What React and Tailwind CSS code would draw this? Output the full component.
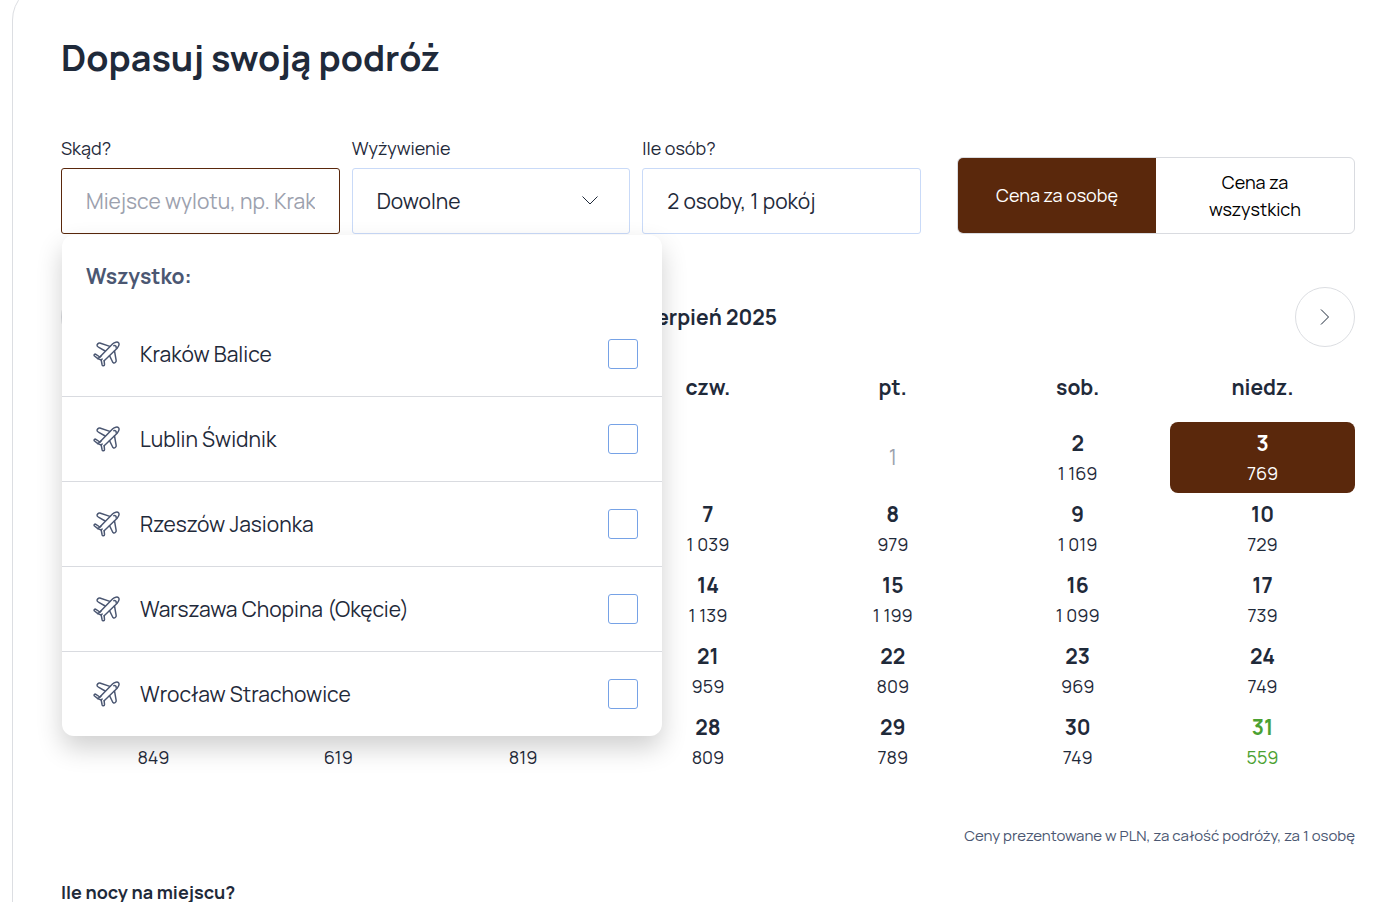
import { useState } from 'react'

const AIRPORTS = [
  { id: 'krk', name: 'Kraków Balice' },
  { id: 'luz', name: 'Lublin Świdnik' },
  { id: 'rze', name: 'Rzeszów Jasionka' },
  { id: 'waw', name: 'Warszawa Chopina (Okęcie)' },
  { id: 'wro', name: 'Wrocław Strachowice' },
]

const WEEKDAYS = ['pon.', 'wt.', 'śr.', 'czw.', 'pt.', 'sob.', 'niedz.']

const WEEKS = [
  [null, null, null, null, { day: 1, past: true }, { day: 2, price: '1 169' }, { day: 3, price: '769' }],
  [{ day: 4 }, { day: 5 }, { day: 6 }, { day: 7, price: '1 039' }, { day: 8, price: '979' }, { day: 9, price: '1 019' }, { day: 10, price: '729' }],
  [{ day: 11 }, { day: 12 }, { day: 13 }, { day: 14, price: '1 139' }, { day: 15, price: '1 199' }, { day: 16, price: '1 099' }, { day: 17, price: '739' }],
  [{ day: 18 }, { day: 19 }, { day: 20 }, { day: 21, price: '959' }, { day: 22, price: '809' }, { day: 23, price: '969' }, { day: 24, price: '749' }],
  [{ day: 25, price: '849' }, { day: 26, price: '619' }, { day: 27, price: '819' }, { day: 28, price: '809' }, { day: 29, price: '789' }, { day: 30, price: '749' }, { day: 31, price: '559', best: true }],
]

function PlaneIcon() {
  return (
    <svg viewBox="0 0 80 78" className="w-[27px] h-[26px] shrink-0" fill="none" stroke="#4b5772" strokeWidth="4.4" strokeLinecap="round" strokeLinejoin="round" aria-hidden="true">
      <path d="M20 48 58 9C64 3 73 2 76 5C79 9 77 16 72 22L33 59" />
      <path d="M50 16 20 6C16 5 10 11 12 15C13 17 15 18 17 19L36 30" />
      <path d="M64 30 69 58C70 63 64 68 60 65C58 64 58 62 57 60L49 44" />
      <path d="M20 48 8 40C5 38 1 42 4 45L14 53L24 57L27 72C28 76 34 75 34 71L33 59" />
      <path d="M14 53 24 45M24 57 27 54" />
      <path d="M62 14C67 13 70 16 69 21" />
    </svg>
  )
}

function Chevron({ className, points }) {
  return (
    <svg viewBox="0 0 16 16" className={className} fill="none" stroke="#1f2a3a" strokeWidth="1" aria-hidden="true">
      <polyline points={points} />
    </svg>
  )
}

function AirportList({ selected, onToggle }) {
  return (
    <div className="absolute left-px top-full z-20 mt-px w-[600px] overflow-hidden rounded-xl bg-white shadow-[0_12px_26px_rgba(0,0,0,0.19)]">
      <div className="px-6 pt-[26px] pb-[21px] text-[21px] leading-[30px] font-bold text-[#4b5772]">Wszystko:</div>
      <ul>
        {AIRPORTS.map((airport) => (
          <li key={airport.id} className="border-b border-[#d9dbe0] last:border-b-0">
            <label htmlFor={airport.id} className="flex h-[84px] cursor-pointer items-center pr-6 pl-[31px]">
              <PlaneIcon />
              <span className="ml-5 flex-1 text-[21px] leading-[30px]">{airport.name}</span>
              <input
                id={airport.id}
                type="checkbox"
                checked={selected.includes(airport.id)}
                onChange={() => onToggle(airport.id)}
                className="size-[30px] appearance-none rounded-[3px] border border-[#76a2e6] bg-white checked:bg-[#5a280c]"
              />
            </label>
          </li>
        ))}
      </ul>
    </div>
  )
}

function DayCell({ item, active, onSelect }) {
  if (!item) return <td />
  if (item.past) return <td className="p-0 text-center text-[21px] text-[#9ca1ae]">{item.day}</td>

  const color = active ? 'bg-[#5a280c] text-white' : item.best ? 'text-[#4ba132]' : ''
  return (
    <td className="p-0">
      <button type="button" onClick={() => onSelect(item.day)} className={`flex h-[71px] w-full flex-col items-center justify-center rounded-lg ${color}`}>
        <span className="text-[21px] leading-[30px] font-bold">{item.day}</span>
        <span className="text-[18px] leading-[30px]">{item.price}</span>
      </button>
    </td>
  )
}

export default function App() {
  const [selected, setSelected] = useState([])
  const [day, setDay] = useState(3)
  const [perPerson, setPerPerson] = useState(true)

  const toggleAirport = (id) => {
    setSelected(selected.includes(id) ? selected.filter((s) => s !== id) : [...selected, id])
  }

  const field = 'h-[66px] w-full rounded-[3px] border bg-white px-6 text-[21px] outline-none'

  return (
    <div className="h-screen overflow-hidden bg-white font-['Manrope','Inter',sans-serif] text-[#1f2a3a]">
      <main className="-mt-4 -mr-1 ml-3 rounded-l-[36px] border border-[#dcdee2] px-12 pt-[49px] pb-12">
        <h1 className="text-[36px] leading-[48px] font-bold">Dopasuj swoją podróż</h1>

        <div className="mt-[53px] flex items-end gap-9">
          <div className="grid flex-1 grid-cols-3 gap-3">
            <div className="relative">
              <label htmlFor="from" className="block pb-1.5 text-[18px] leading-[27px]">Skąd?</label>
              <input id="from" type="text" placeholder="Miejsce wylotu, np. Kraków" className={`${field} border-[#5a280c] placeholder:text-[#9ca1ae]`} />
              <AirportList selected={selected} onToggle={toggleAirport} />
            </div>
            <div>
              <label htmlFor="board" className="block pb-1.5 text-[18px] leading-[27px]">Wyżywienie</label>
              <div className="relative">
                <select id="board" className={`${field} appearance-none border-[#c9daf8] leading-[30px]`}>
                  <option>Dowolne</option>
                </select>
                <Chevron className="pointer-events-none absolute top-6 right-8 size-4" points="0.5,4.5 8,12 15.5,4.5" />
              </div>
            </div>
            <div>
              <label htmlFor="people" className="block pb-1.5 text-[18px] leading-[27px]">Ile osób?</label>
              <input id="people" type="text" readOnly value="2 osoby, 1 pokój" className={`${field} border-[#c9daf8]`} />
            </div>
          </div>

          <div className="flex h-[77px] w-[398px] overflow-hidden rounded-md border border-[#d9dbe0] text-[18px] leading-[27px]">
            <button type="button" onClick={() => setPerPerson(true)} className={`flex-1 px-8 ${perPerson ? 'bg-[#5a280c] text-white' : 'text-black'}`}>
              Cena za osobę
            </button>
            <button type="button" onClick={() => setPerPerson(false)} className={`flex-1 px-8 ${perPerson ? 'text-black' : 'bg-[#5a280c] text-white'}`}>
              Cena za wszystkich
            </button>
          </div>
        </div>

        <section>
          <div className="mt-[53px] flex items-center justify-between">
            <button type="button" aria-label="Poprzedni miesiąc" className="flex size-[60px] items-center justify-center rounded-full border border-[#dcdee2]">
              <Chevron className="size-4" points="11.5,0.5 4,8 11.5,15.5" />
            </button>
            <h2 className="text-[21px] leading-[30px] font-bold">sierpień 2025</h2>
            <button type="button" aria-label="Następny miesiąc" className="flex size-[60px] items-center justify-center rounded-full border border-[#dcdee2]">
              <Chevron className="size-4" points="4,0.5 11.5,8 4,15.5" />
            </button>
          </div>

          <table className="mt-[25px] w-full table-fixed">
            <thead>
              <tr className="h-[50px] align-top text-[21px] leading-[30px]">
                {WEEKDAYS.map((name) => (
                  <th key={name} className="p-0 font-bold">{name}</th>
                ))}
              </tr>
            </thead>
            <tbody>
              {WEEKS.map((week, i) => (
                <tr key={i} className="h-[71px]">
                  {week.map((item, j) => (
                    <DayCell key={j} item={item} active={item?.day === day} onSelect={setDay} />
                  ))}
                </tr>
              ))}
            </tbody>
          </table>

          <p className="mt-[47px] text-right text-[15px] leading-6 text-[#4b5772]">
            Ceny prezentowane w PLN, za całość podróży, za 1 osobę
          </p>
        </section>

        <h3 className="mt-8 text-[18px] leading-6 font-bold">Ile nocy na miejscu?</h3>
      </main>
    </div>
  )
}
